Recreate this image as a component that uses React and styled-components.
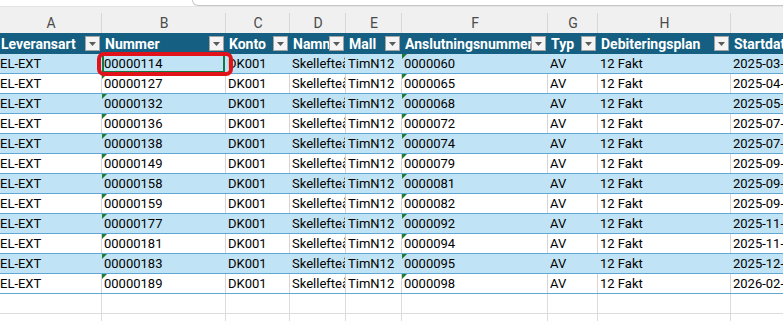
import styled, { createGlobalStyle } from "styled-components";

const GlobalStyle = createGlobalStyle`
  html, body {
    margin: 0;
    padding: 0;
    background: #fff;
    overflow: hidden;
  }
  body {
    font-family: Roboto, "Liberation Sans", sans-serif;
  }
`;

// widths include the 1px gridline on the right of each column
const COLUMNS = "102px 124px 64px 56px 56px 146px 50px 133px 130px";

const LETTERS = ["A", "B", "C", "D", "E", "F", "G", "H", "I"];

const HEADERS = [
  "Leveransart",
  "Nummer",
  "Konto",
  "Namn",
  "Mall",
  "Anslutningsnummer",
  "Typ",
  "Debiteringsplan",
  "Startdatum",
];

const ROWS = [
  ["00000114", "0000060", "2025-03-01"],
  ["00000127", "0000065", "2025-04-01"],
  ["00000132", "0000068", "2025-05-01"],
  ["00000136", "0000072", "2025-07-01"],
  ["00000138", "0000074", "2025-07-01"],
  ["00000149", "0000079", "2025-09-01"],
  ["00000158", "0000081", "2025-09-01"],
  ["00000159", "0000082", "2025-09-01"],
  ["00000177", "0000092", "2025-11-01"],
  ["00000181", "0000094", "2025-11-01"],
  ["00000183", "0000095", "2025-12-01"],
  ["00000189", "0000098", "2026-02-01"],
];

const Sheet = styled.div`
  width: 783px;
  height: 321px;
  overflow: hidden;
  background: #fff;
`;

const TopStrip = styled.div`
  height: 7px;
  box-sizing: border-box;
  padding-left: 192px;
  background: #fff;
  border-bottom: 1px solid #e4e4e4;
`;

const FormulaBox = styled.div`
  width: 700px;
  height: 6px;
  box-sizing: border-box;
  border: 1px solid #c6c6c6;
  border-top: none;
  border-radius: 0 0 0 6px;
  background: #fff;
`;

const Grid = styled.div`
  display: grid;
  grid-template-columns: ${COLUMNS};
  width: max-content;
`;

const LetterRow = styled(Grid)`
  height: 26px;
  background: #f0f0f0;
`;

const Letter = styled.div`
  display: flex;
  align-items: center;
  justify-content: center;
  padding-top: 5px;
  font-size: 14px;
  color: #4a4a4a;
  background: linear-gradient(#d7d7d7, #d7d7d7) right bottom / 1px
    calc(100% - 6px) no-repeat;
`;

const HeaderRow = styled(Grid)`
  height: 21px;
  background: #156082;
`;

const HeaderCell = styled.div`
  display: flex;
  align-items: center;
  min-width: 0;
  padding: 0 2px 0 ${(p) => (p.$first ? 1 : 3)}px;
  overflow: hidden;
  color: #fff;
  font-size: 14px;
  font-weight: 700;
`;

const HeaderLabel = styled.span`
  flex: 1;
  min-width: 0;
  overflow: hidden;
  white-space: nowrap;
`;

const FilterButton = styled.span`
  flex: 0 0 auto;
  display: flex;
  align-items: center;
  justify-content: center;
  width: 15px;
  height: 15px;
  box-sizing: border-box;
  border: 1px solid #a3a3a3;
  background: #f4f4f4;
`;

const DataRow = styled(Grid)`
  height: 20px;
  box-sizing: border-box;
  background: ${(p) => (p.$shaded ? "#c0e4f5" : "#fff")};
  border-bottom: 1px solid #5fa8d4;
`;

const Cell = styled.div`
  position: relative;
  display: flex;
  align-items: center;
  min-width: 0;
  padding-left: ${(p) => (p.$first ? 0 : 2)}px;
  font-size: 13px;
  color: #000;
  border-right: 1px solid ${(p) => (p.$shaded ? "transparent" : "#d5d5d5")};
  box-shadow: ${(p) => (p.$selected ? "inset 0 0 0 2px #137a43" : "none")};
`;

const CellText = styled.span`
  flex: 1;
  min-width: 0;
  overflow: hidden;
  white-space: nowrap;
`;

const ErrorMark = styled.span`
  position: absolute;
  top: 0;
  left: 0;
  width: 0;
  height: 0;
  border-top: 5px solid #1d7b34;
  border-right: 5px solid transparent;
`;

const Annotation = styled.span`
  position: absolute;
  top: -2px;
  bottom: -3px;
  left: -5px;
  right: -8px;
  border: 4px solid #e2121a;
  border-radius: 7px;
  z-index: 3;
  pointer-events: none;
`;

const EmptyRow = styled(Grid)`
  height: 19px;
  border-bottom: 1px solid #dcdcdc;
`;

const EmptyCell = styled.div`
  border-right: 1px solid #dcdcdc;
`;

function FilterIcon() {
  return (
    <FilterButton>
      <svg width="7" height="4" viewBox="0 0 7 4">
        <path d="M0 0h7L3.5 4z" fill="#5a5a5a" />
      </svg>
    </FilterButton>
  );
}

export default function App() {
  return (
    <>
      <GlobalStyle />
      <Sheet>
        <TopStrip>
          <FormulaBox />
        </TopStrip>

        <LetterRow>
          {LETTERS.map((l) => (
            <Letter key={l}>{l}</Letter>
          ))}
        </LetterRow>

        <HeaderRow>
          {HEADERS.map((h, i) => (
            <HeaderCell key={h} $first={i === 0}>
              <HeaderLabel>{h}</HeaderLabel>
              <FilterIcon />
            </HeaderCell>
          ))}
        </HeaderRow>

        {ROWS.map(([nummer, anslutning, start], r) => {
          const shaded = r % 2 === 0;
          const values = [
            "EL-EXT",
            nummer,
            "DK001",
            "Skellefteå",
            "TimN12",
            anslutning,
            "AV",
            "12 Fakt",
            start,
          ];
          return (
            <DataRow key={nummer} $shaded={shaded}>
              {values.map((v, c) => {
                const selected = r === 0 && c === 1;
                const marked = (c === 1 && r > 0) || c === 5;
                return (
                  <Cell
                    key={c}
                    $first={c === 0}
                    $shaded={shaded}
                    $selected={selected}
                  >
                    {marked && <ErrorMark />}
                    <CellText>{v}</CellText>
                    {selected && <Annotation />}
                  </Cell>
                );
              })}
            </DataRow>
          );
        })}

        {[0, 1].map((r) => (
          <EmptyRow key={r}>
            {LETTERS.map((l) => (
              <EmptyCell key={l} />
            ))}
          </EmptyRow>
        ))}
      </Sheet>
    </>
  );
}
